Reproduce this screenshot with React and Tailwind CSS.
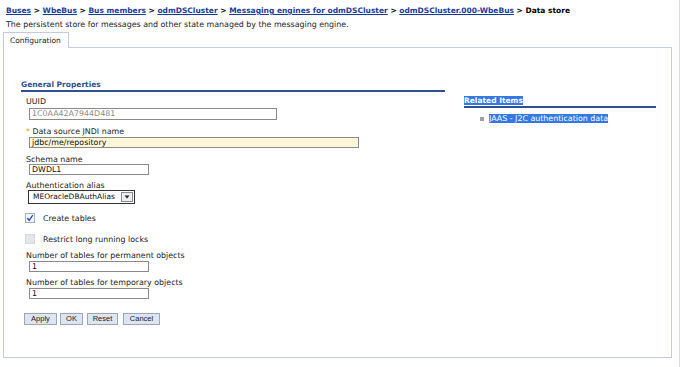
import React from "react";

const crumbs = [
  "Buses",
  "WbeBus",
  "Bus members",
  "odmDSCluster",
  "Messaging engines for odmDSCluster",
  "odmDSCluster.000-WbeBus",
];

function Label({ children, className = "" }) {
  return (
    <div className={"pl-[5px] h-[8px] leading-[8px] text-[#222] " + className}>
      {children}
    </div>
  );
}

function TextBox({ value, w, h = 11, muted, yellow, className = "" }) {
  return (
    <div
      className={
        "ml-[8px] border border-[#8a8a8a] pl-[2px] flex items-center " +
        (yellow ? "bg-[#fdf7d9] " : "bg-white ") +
        (muted ? "text-[#8a8a8a] " : "text-[#111] ") +
        className
      }
      style={{ width: w, height: h }}
    >
      {value}
    </div>
  );
}

function CheckRow({ checked, label, className = "" }) {
  return (
    <div className={"flex items-center h-[10px] " + className}>
      <div
        className={
          "ml-[4px] w-[10px] h-[10px] border flex items-center justify-center " +
          (checked ? "border-[#9fb0d0] bg-[#f4f6fb]" : "border-[#d6d9de] bg-[#e4e6ea]")
        }
      >
        {checked && (
          <svg width="8" height="8" viewBox="0 0 8 8">
            <path d="M1.2 4 L3.2 6.4 L6.8 1.2" fill="none" stroke="#2b4fa8" strokeWidth="1.3" />
          </svg>
        )}
      </div>
      <span className="ml-[8px] text-[#222] leading-[10px] pt-[2px]">{label}</span>
    </div>
  );
}

function Btn({ children, w, className = "" }) {
  return (
    <button
      className={
        "h-[12px] border border-[#9aa6c0] bg-[#dde4f2] text-[7.5px] leading-[10px] text-[#222] font-['Liberation_Sans',sans-serif] text-center " +
        className
      }
      style={{ width: w }}
    >
      {children}
    </button>
  );
}

export default function App() {
  return (
    <div className="w-[684px] h-[367px] bg-white flex font-['DejaVu_Sans',sans-serif] text-[7.9px] overflow-hidden">
      <div className="w-[680px] border-r border-[#dcdcdc] flex flex-col">
        {/* breadcrumb */}
        <div className="pl-[6px] pt-[6px] leading-[9px] font-bold text-black text-[7.5px]">
          {crumbs.map((c) => (
            <span key={c}>
              <span className="text-[#1a3a9a] underline">{c}</span> {"> "}
            </span>
          ))}
          <span>Data store</span>
        </div>
        <div className="pl-[6px] pt-[5px] leading-[9px] text-[#222]">
          The persistent store for messages and other state managed by the messaging engine.
        </div>

        {/* tabs */}
        <div className="mt-[3px] ml-[3px] flex">
          <div className="w-[66px] h-[16px] border border-b-0 border-[#c3cbe3] pl-[6px] pt-[3px] text-[#222] leading-[9px] text-[7.5px]">
            Configuration
          </div>
          <div className="w-[603px] border-b border-[#c3cbe3]" />
        </div>

        {/* panel */}
        <div className="ml-[3px] w-[669px] h-[310px] border border-t-0 border-[#c3cbe3] flex pt-[33px]">
          <div className="ml-[17px] w-[424px] flex flex-col">
            <div className="border-b-2 border-[#2f4f8f] font-bold text-[#2f4f8f] leading-[8px] text-[7.5px] pb-[1px]">
              General Properties
            </div>

            <Label className="mt-[6px]">UUID</Label>
            <TextBox value="1C0AA42A7944D481" w={248} h={12} muted className="mt-[2px]" />

            <Label className="mt-[8px] pl-[3px]">
              <span className="text-[#d9a400]">*</span> Data source JNDI name
            </Label>
            <TextBox value="jdbc/me/repository" w={330} yellow className="mt-[1px]" />

            <Label className="mt-[8px]">Schema name</Label>
            <TextBox value="DWDL1" w={120} />

            <Label className="mt-[7px]">Authentication alias</Label>
            <div className="ml-[7px] w-[107px] h-[14px] border border-[#333] flex items-center justify-between pl-[4px] pr-[1px]">
              <span className="text-[#111] text-[7.5px]">MEOracleDBAuthAlias</span>
              <div className="w-[12px] h-[10px] border border-[#8a8a8a] bg-[#eceef2] flex items-center justify-center">
                <svg width="6" height="4" viewBox="0 0 6 4">
                  <path d="M0.5 0.5 L5.5 0.5 L3 3.5 Z" fill="#222" />
                </svg>
              </div>
            </div>

            <CheckRow checked label="Create tables" className="mt-[9px]" />
            <CheckRow label="Restrict long running locks" className="mt-[11px]" />

            <Label className="mt-[8px]">Number of tables for permanent objects</Label>
            <TextBox value="1" w={120} className="mt-[1px]" />

            <Label className="mt-[7px]">Number of tables for temporary objects</Label>
            <TextBox value="1" w={120} className="mt-[1px]" />

            <div className="mt-[14px] ml-[3px] flex">
              <Btn w={33}>Apply</Btn>
              <Btn w={23} className="ml-[3px]">OK</Btn>
              <Btn w={31} className="ml-[4px]">Reset</Btn>
              <Btn w={37} className="ml-[5px]">Cancel</Btn>
            </div>
          </div>

          <div className="ml-[19px] w-[192px] pt-[16px] flex flex-col">
            <div className="border-b-2 border-[#2f4f8f] leading-[8px] text-[7.5px] pb-[1px]">
              <span className="font-bold text-white bg-[#3378e6]">Related Items</span>
            </div>
            <div className="mt-[6px] ml-[16px] flex items-center">
              <span className="w-[4px] h-[4px] bg-[#a0a0a8]" />
              <span className="ml-[5px] leading-[9px] text-white bg-[#3378e6]">
                JAAS - J2C authentication data
              </span>
            </div>
          </div>
        </div>
      </div>
    </div>
  );
}
